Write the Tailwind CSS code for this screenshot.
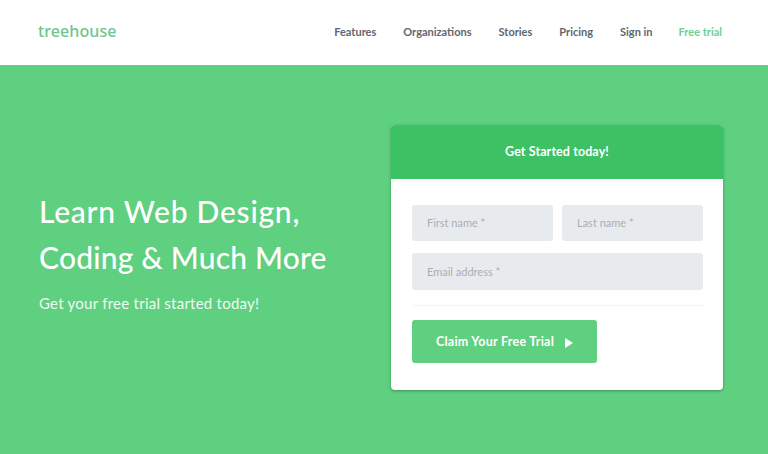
<!doctype html>
<html lang="en">
<head>
<meta charset="utf-8">
<title>Treehouse</title>
<script src="https://cdn.jsdelivr.net/npm/@tailwindcss/browser@4"></script>
</head>
<body class="h-[454px] w-[768px] overflow-hidden bg-[#5fcf80] font-['Lato',sans-serif]">
  <header class="flex h-[65px] items-center justify-between bg-white pl-[38px] pr-[46px]">
    <a class="pb-[3px] font-['Noto_Sans',sans-serif] text-[16px] font-medium tracking-[0.1px] text-[#6cc68d]">treehouse</a>
    <nav class="flex items-center text-[11px] font-bold text-[#62656e]">
      <a class="mr-[27px]">Features</a>
      <a class="mr-[27px]">Organizations</a>
      <a class="mr-[27px]">Stories</a>
      <a class="mr-[27px]">Pricing</a>
      <a class="mr-[26px]">Sign in</a>
      <a class="text-[#6fd08f]">Free trial</a>
    </nav>
  </header>
  <main class="flex items-start justify-between pl-[39px] pr-[45px] pt-[60px]">
    <section class="pt-[63px] text-white">
      <h1 class="text-[30px] font-medium leading-[46px]">
        <span class="block tracking-[0.75px]">Learn Web Design,</span>
        <span class="block tracking-[0.2px]">Coding &amp; Much More</span>
      </h1>
      <p class="mt-[12px] text-[15px] leading-[22px] tracking-[0.25px] text-white/90">Get your free trial started today!</p>
    </section>
    <form class="w-[332px] overflow-hidden rounded-[4px] bg-white shadow-[0_1px_3px_rgba(0,0,0,0.3)]">
      <h2 class="flex h-[54px] items-center justify-center bg-[#3cc165] pt-[1px] text-[12.5px] font-bold tracking-[0.1px] text-white">Get Started today!</h2>
      <div class="pb-[27px] pl-[21px] pr-[20px] pt-[26px]">
        <div class="grid grid-cols-2 gap-[9px]">
          <input class="h-[36px] w-full rounded-[3px] bg-[#e8ebee] px-[15px] pb-[1px] text-[11px] placeholder:text-[#a9aeb5]" placeholder="First name *">
          <input class="h-[36px] w-full rounded-[3px] bg-[#e8ebee] px-[15px] pb-[1px] text-[11px] placeholder:text-[#a9aeb5]" placeholder="Last name *">
        </div>
        <input class="mt-[12px] h-[37px] w-full rounded-[3px] bg-[#e8ebee] px-[15px] pb-[1px] text-[11px] placeholder:text-[#a9aeb5]" placeholder="Email address *">
        <div class="mb-[14px] mt-[15px] border-t border-[#f2f3f4]"></div>
        <button type="button" class="flex h-[43px] w-[185px] items-center justify-center gap-[11px] rounded-[3px] bg-[#5fcf80] pt-[2px] text-[12.5px] font-bold tracking-[0.25px] text-white">
          Claim Your Free Trial
          <svg width="8" height="10" viewBox="0 0 8 10" fill="currentColor"><path d="M0 0l8 5-8 5z"/></svg>
        </button>
      </div>
    </form>
  </main>
</body>
</html>
